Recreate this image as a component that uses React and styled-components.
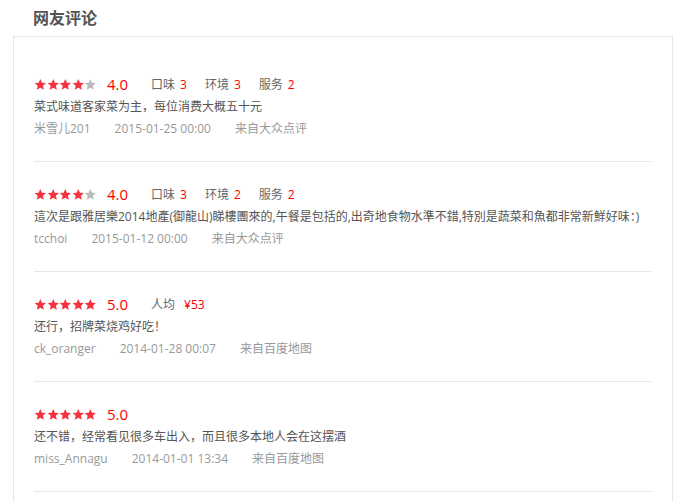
import React from 'react'
import styled, { createGlobalStyle } from 'styled-components'

const GlobalStyle = createGlobalStyle`
  body {
    margin: 0;
    background: #fff;
    font-family: "Open Sans", "Noto Sans CJK SC", sans-serif;
    font-size: 12px;
    color: #555;
  }
`

const Page = styled.div`
  padding: 0 16px 0 13px;
  width: 660px;
`

const Title = styled.h2`
  margin: 0 0 2px;
  padding-left: 20px;
  height: 34px;
  line-height: 34px;
  font-family: "Noto Sans CJK SC", sans-serif;
  font-size: 16px;
  font-weight: bold;
  color: #555;
`

const Box = styled.section`
  border: 1px solid #e6e6e6;
  padding: 15px 20px 15px;
`

const Review = styled.div`
  padding: 20px 0 21px;
  border-bottom: 1px solid #e8e8e8;
`

const RateRow = styled.div`
  display: flex;
  align-items: center;
  height: 24px;
`

const Stars = styled.span`
  display: flex;
  margin-right: 10px;

  svg {
    width: 12.6px;
    height: 13px;
  }
`

const Score = styled.span`
  font-size: 15px;
  color: #f00;
  margin-right: ${p => p.$gap}px;
`

const Sub = styled.span`
  display: flex;
  align-items: center;
  margin-right: 18px;
  color: #666;

  b {
    font-weight: normal;
    color: #f00;
    margin-left: ${p => p.$gap}px;
  }
`

const Comment = styled.p`
  margin: 0;
  line-height: 22px;
  color: #555;
  white-space: nowrap;
`

const Meta = styled.div`
  display: flex;
  line-height: 22px;
  color: #999;

  span {
    margin-right: 24px;
  }
`

const Star = ({ on }) => (
  <svg viewBox="0 0 24 24">
    <path
      fill={on ? '#f5333f' : '#bbb'}
      d="M12 1.5l3.1 7.1 7.7.7-5.8 5.1 1.7 7.6L12 18l-6.7 4 1.7-7.6-5.8-5.1 7.7-.7z"
    />
  </svg>
)

const reviews = [
  {
    rate: 4,
    subs: [['口味', 3], ['环境', 3], ['服务', 2]],
    text: '菜式味道客家菜为主，每位消费大概五十元',
    user: '米雪儿201',
    time: '2015-01-25 00:00',
    from: '来自大众点评'
  },
  {
    rate: 4,
    subs: [['口味', 3], ['环境', 2], ['服务', 2]],
    text: '這次是跟雅居樂2014地產(御龍山)睇樓團來的,午餐是包括的,出奇地食物水準不錯,特別是蔬菜和魚都非常新鮮好味：)',
    user: 'tcchoi',
    time: '2015-01-12 00:00',
    from: '来自大众点评'
  },
  {
    rate: 5,
    avg: '¥53',
    text: '还行，招牌菜烧鸡好吃！',
    user: 'ck_oranger',
    time: '2014-01-28 00:07',
    from: '来自百度地图'
  },
  {
    rate: 5,
    text: '还不错，经常看见很多车出入，而且很多本地人会在这摆酒',
    user: 'miss_Annagu',
    time: '2014-01-01 13:34',
    from: '来自百度地图'
  }
]

export default function App() {
  return (
    <Page>
      <GlobalStyle />
      <Title>网友评论</Title>
      <Box>
        {reviews.map((r, i) => (
          <Review key={i}>
            <RateRow>
              <Stars>
                {[1, 2, 3, 4, 5].map(n => (
                  <Star key={n} on={n <= r.rate} />
                ))}
              </Stars>
              <Score $gap={r.avg ? 23 : 23}>{r.rate.toFixed(1)}</Score>
              {r.subs &&
                r.subs.map(([label, v]) => (
                  <Sub key={label} $gap={5}>
                    {label}
                    <b>{v}</b>
                  </Sub>
                ))}
              {r.avg && (
                <Sub $gap={9}>
                  人均
                  <b>{r.avg}</b>
                </Sub>
              )}
            </RateRow>
            <Comment>{r.text}</Comment>
            <Meta>
              <span>{r.user}</span>
              <span>{r.time}</span>
              <span>{r.from}</span>
            </Meta>
          </Review>
        ))}
      </Box>
    </Page>
  )
}
